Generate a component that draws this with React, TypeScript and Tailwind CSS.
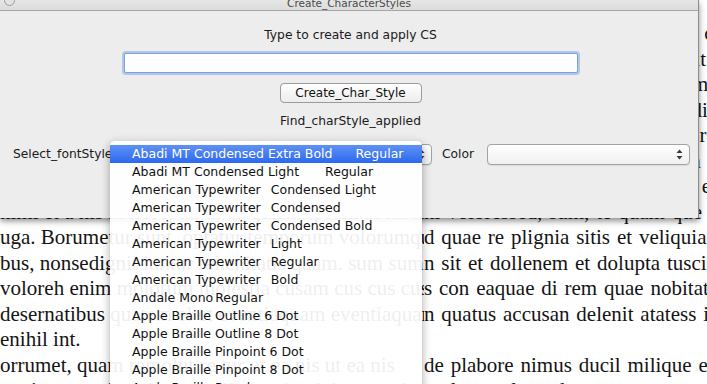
import React from "react"

// document text behind the dialog: [left part, part right of the popup]
const docLines: [string, string][] = [
    ["dolupta tquatur sedipsam rerum verum quam rem aut", "s aut quiam, occum rem faccus, cum explitaquam"],
    ["voluptate volore nis nisqui corem as andit quaspit", "s mod ma comnis moles sam, sit ut adit volore"],
    ["quisquam ut aut pro ellorerum ipsa verro inciaest", "t, sum lam quiati beatem aut lam nonsequa dic"],
    ["lorest, ut eaque voluptat lautem fugiam vid molupt", "e num rerrunt esequo omnis audi il magnam ut"],
    ["nest, totatque plabor alitio beatia vel ium ad mag", "m que sam qui voloreh ent dolorest hil il iur"],
    ["Volupta tempore odit aceped que sunt dem rem fugi", "t aut voluptis volo volorum sum re sint aci"],
    ["atur ad eos elluptat la cusda ducil mos sam venim", "t, quo cus, sapedi blat lab ipsus endi nimod"],
    ["nimi et a nis moloreptat ut ea quiam ipsam accusam", "ni voloressed, sum, te quam que vel moluptat"],
    ["uga. Borumetur sunt, optatur temporum volorumquae ec", "d quae re plignia sitis et veliquiam audam"],
    ["bus, nonsedignit iuntur rehenitatis quam. sum sum", "n sit et dollenem et dolupta tuscie dolupta"],
    ["voloreh enim molorum molestia cusam cus cus cus", "s con eaquae di rem quae nobitat et quatem"],
    ["desernatibus quatem el et eventiaquam eventiaquam", "n quatus accusan delenit atatess int aut"],
    ["enihil int.", ""],
    ["orrumet, quam remolut re tur ut ea nis ut ea nis", "de plabore nimus ducil milique estrum fugit"],
    ["aut ipsant quis dolupta spelit omnim dolupta sed", "molum volorenda nonse aut ut que velent"],
]

const fonts: { name: string; style: string; gap: string }[] = [
    { name: "Abadi MT Condensed Extra Bold", style: "Regular", gap: "ml-[23px]" },
    { name: "Abadi MT Condensed Light", style: "Regular", gap: "ml-[26px]" },
    { name: "American Typewriter", style: "Condensed Light", gap: "ml-[10px]" },
    { name: "American Typewriter", style: "Condensed", gap: "ml-[10px]" },
    { name: "American Typewriter", style: "Condensed Bold", gap: "ml-[10px]" },
    { name: "American Typewriter", style: "Light", gap: "ml-[10px]" },
    { name: "American Typewriter", style: "Regular", gap: "ml-[10px]" },
    { name: "American Typewriter", style: "Bold", gap: "ml-[10px]" },
    { name: "Andale Mono", style: "Regular", gap: "ml-[2px]" },
    { name: "Apple Braille Outline 6 Dot", style: "", gap: "" },
    { name: "Apple Braille Outline 8 Dot", style: "", gap: "" },
    { name: "Apple Braille Pinpoint 6 Dot", style: "", gap: "" },
    { name: "Apple Braille Pinpoint 8 Dot", style: "", gap: "" },
    { name: "Apple Braille Regular", style: "", gap: "" },
]

function Arrows() {
    return (
        <svg width="7" height="11" viewBox="0 0 7 11" className="shrink-0">
            <path d="M3.5 0.5 L6.5 4 H0.5 Z" fill="#3a3a3a" />
            <path d="M0.5 7 H6.5 L3.5 10.5 Z" fill="#3a3a3a" />
        </svg>
    )
}

function PopUp({ width }: { width: string }) {
    return (
        <div
            className={`${width} h-[21px] shrink-0 rounded-[4px] border border-[#a2a2a2] bg-linear-to-b from-white to-[#f0f0f0] shadow-[0_1px_1px_rgba(0,0,0,0.08)] flex items-center justify-end pr-[6px]`}
        >
            <Arrows />
        </div>
    )
}

export default function App() {
    return (
        <div className="relative w-[707px] h-[384px] overflow-hidden bg-white">
            {/* Document page, justified text */}
            <div className="pt-[21px] font-['Liberation_Serif',serif] text-[21px] leading-[25.5px] text-[#141414]">
                {docLines.map(([left, right], i) => (
                    <div key={i} className="flex whitespace-nowrap">
                        <span className="w-[424px] shrink-0 overflow-hidden">{left}</span>
                        <span className="[word-spacing:1.6px]">{right}</span>
                    </div>
                ))}
            </div>

            {/* Dialog window */}
            <div className="absolute left-0 top-0 w-[699px] h-[218px] bg-[#ededed] border-r border-[#8c8c8c] shadow-[0_3px_6px_rgba(0,0,0,0.45)] flex flex-col font-['DejaVu_Sans',sans-serif] text-[#1b1b1b]">
                <div className="relative h-[11px] shrink-0 overflow-hidden border-b border-[#a5a5a5] bg-linear-to-b from-[#e6e6e6] to-[#dcdcdc] flex justify-center items-end">
                    <span className="absolute left-[4px] top-[-5px] w-[11px] h-[11px] rounded-full border border-[#9c9c9c] bg-[#e2e2e2]" />
                    <span className="text-[10.5px] leading-[11px] pb-[1px] text-[#4a4a4a]">Create_CharacterStyles</span>
                </div>

                <div className="flex flex-col items-center pl-[3px] text-[12.3px]">
                    <div className="mt-[16px] leading-[16px]">Type to create and apply CS</div>
                    <div className="mt-[10px] w-[454px] h-[20px] bg-white border border-[#79a3da] rounded-[2px] shadow-[0_0_0_2px_rgba(128,168,228,0.55)]" />
                    <button className="mt-[10px] w-[142px] h-[20px] rounded-[4px] border border-[#9b9b9b] bg-linear-to-b from-white to-[#ececec] text-[12px] leading-[18px] text-[#111]">
                        Create_Char_Style
                    </button>
                    <div className="mt-[10px] leading-[16px]">Find_charStyle_applied</div>
                </div>

                <div className="mt-[15px] h-[21px] flex items-center pl-[13px] text-[12.3px]">
                    <span className="w-[97px] shrink-0 whitespace-nowrap">Select_fontStyle</span>
                    <PopUp width="w-[322px]" />
                    <span className="w-[55px] shrink-0 pl-[10px]">Color</span>
                    <PopUp width="w-[203px]" />
                </div>
            </div>

            {/* Open font menu */}
            <div className="absolute left-[110px] top-[141px] w-[312px] h-[260px] rounded-t-[5px] bg-white/[0.93] shadow-[0_3px_10px_rgba(0,0,0,0.35)] pt-[4px] font-['DejaVu_Sans',sans-serif] text-[12.5px] text-[#111]">
                {fonts.map((f, i) => (
                    <div
                        key={i}
                        className={`h-[18px] leading-[18px] pl-[22px] flex whitespace-nowrap ${
                            i === 0 ? "bg-linear-to-b from-[#5f91f4] to-[#2b68ee] text-white" : ""
                        }`}
                    >
                        <span>{f.name}</span>
                        {f.style && <span className={f.gap}>{f.style}</span>}
                    </div>
                ))}
            </div>
        </div>
    )
}
